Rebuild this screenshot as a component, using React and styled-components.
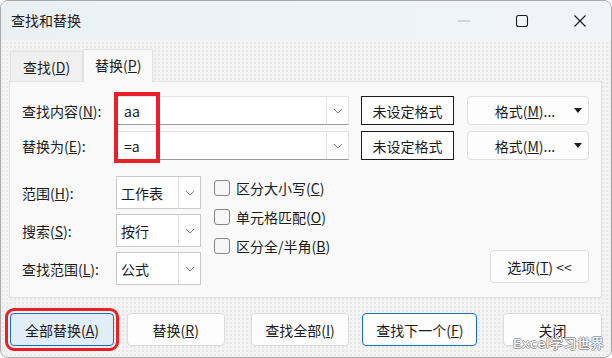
import styled, { createGlobalStyle } from 'styled-components';

const GlobalStyle = createGlobalStyle`
  html, body {
    margin: 0;
    padding: 0;
    background: #ffffff;
  }
  body {
    font-family: "Noto Sans CJK SC", "Noto Sans", sans-serif;
    font-size: 14px;
    color: #1b1b1b;
  }
`;

const FONT = `"Noto Sans CJK SC", "Noto Sans", sans-serif`;

export default function App() {
  return (
    <>
      <GlobalStyle />
      <Window>
        <TitleBar>
          <Title>查找和替换</Title>
          <Controls>
            <CtrlBtn>
              <svg width="14" height="14" viewBox="0 0 14 14">
                <line x1="1" y1="7" x2="13" y2="7" stroke="#b9b9b9" strokeWidth="1" />
              </svg>
            </CtrlBtn>
            <CtrlBtn>
              <svg width="14" height="14" viewBox="0 0 14 14">
                <rect x="1.5" y="1.5" width="11" height="11" rx="2" fill="none" stroke="#1b1b1b" strokeWidth="1.1" />
              </svg>
            </CtrlBtn>
            <CtrlBtn>
              <svg width="14" height="14" viewBox="0 0 14 14">
                <path d="M1.5 1.5 L12.5 12.5 M12.5 1.5 L1.5 12.5" stroke="#1b1b1b" strokeWidth="1.1" />
              </svg>
            </CtrlBtn>
          </Controls>
        </TitleBar>

        <Body>
          <TabStrip>
            <Tab>查找(<u>D</u>)</Tab>
            <Tab $active>替换(<u>P</u>)</Tab>
          </TabStrip>

          <Panel>
            <FieldRows>
              <Labels>
                <Label>查找内容(<u>N</u>):</Label>
                <Label>替换为(<u>E</u>):</Label>
              </Labels>
              <InputCol>
                <ComboInput>
                  <InputText>aa</InputText>
                  <ArrowBox><Chevron /></ArrowBox>
                </ComboInput>
                <ComboInput>
                  <InputText>=a</InputText>
                  <ArrowBox><Chevron /></ArrowBox>
                </ComboInput>
                <RedMark />
              </InputCol>
              <PreviewCol>
                <Preview>未设定格式</Preview>
                <Preview>未设定格式</Preview>
              </PreviewCol>
              <FormatCol>
                <FormatBtn>
                  <span>格式(<u>M</u>)...</span>
                  <Caret />
                </FormatBtn>
                <FormatBtn>
                  <span>格式(<u>M</u>)...</span>
                  <Caret />
                </FormatBtn>
              </FormatCol>
            </FieldRows>

            <OptionRows>
              <SelectGrid>
                <Label>范围(<u>H</u>):</Label>
                <Select><SelectText>工作表</SelectText><SelectArrow><Chevron /></SelectArrow></Select>
                <Label>搜索(<u>S</u>):</Label>
                <Select><SelectText>按行</SelectText><SelectArrow><Chevron /></SelectArrow></Select>
                <Label>查找范围(<u>L</u>):</Label>
                <Select><SelectText>公式</SelectText><SelectArrow><Chevron /></SelectArrow></Select>
              </SelectGrid>
              <Checks>
                <CheckRow><Box />区分大小写(<u>C</u>)</CheckRow>
                <CheckRow><Box />单元格匹配(<u>O</u>)</CheckRow>
                <CheckRow><Box />区分全/半角(<u>B</u>)</CheckRow>
              </Checks>
              <OptionsBtn>选项(<u>T</u>) &lt;&lt;</OptionsBtn>
            </OptionRows>
          </Panel>

          <ButtonRow>
            <Button $w={104} $focus $marked>全部替换(<u>A</u>)</Button>
            <Button $w={98} $ml={13}>替换(<u>R</u>)</Button>
            <Button $w={99} $ml={26}>查找全部(<u>I</u>)</Button>
            <Button $w={115} $ml={13} $default>查找下一个(<u>F</u>)</Button>
            <Button $w={99} $ml={26}>关闭</Button>
          </ButtonRow>
        </Body>
        <Watermark>Excel学习世界</Watermark>
      </Window>
    </>
  );
}

function Chevron() {
  return (
    <svg width="10" height="6" viewBox="0 0 10 6">
      <path d="M1 1 L5 5 L9 1" fill="none" stroke="#7a7a7a" strokeWidth="1" />
    </svg>
  );
}

function Caret() {
  return (
    <svg width="8" height="5" viewBox="0 0 8 5">
      <path d="M0 0 L8 0 L4 5 Z" fill="#1b1b1b" />
    </svg>
  );
}

const Window = styled.div`
  position: relative;
  width: 612px;
  height: 358px;
  box-sizing: border-box;
  border: 1px solid #a9a9a9;
  border-radius: 8px;
  overflow: hidden;
  display: flex;
  flex-direction: column;
  background-color: #f3f3f3;
  background-image: radial-gradient(#e7e7e7 0.7px, transparent 0.8px);
  background-size: 4px 4px;
`;

const TitleBar = styled.div`
  height: 39px;
  flex-shrink: 0;
  display: flex;
  align-items: center;
  justify-content: space-between;
  background: linear-gradient(to right, #eaf1f5, #eef3f7 60%, #f0f4f8);
  padding-left: 10px;
`;

const Title = styled.div`
  font-size: 14px;
  color: #1b1b1b;
  margin-top: -1px;
`;

const Controls = styled.div`
  display: flex;
  align-items: center;
  height: 100%;
  margin-right: 2px;
`;

const CtrlBtn = styled.div`
  width: 58px;
  height: 100%;
  display: flex;
  align-items: center;
  justify-content: center;
`;

const Body = styled.div`
  flex: 1;
  display: flex;
  flex-direction: column;
  padding: 8px 9px 0 8px;
`;

const TabStrip = styled.div`
  display: flex;
  align-items: flex-end;
  height: 33px;
  padding-left: 1px;
`;

const Tab = styled.div`
  height: ${(p) => (p.$active ? '33px' : '30px')};
  box-sizing: border-box;
  padding: 0 ${(p) => (p.$active ? '11px' : '12px')};
  display: flex;
  align-items: center;
  font-size: 14px;
  background: ${(p) => (p.$active ? '#f9f9f9' : '#f0f0f0')};
  border: 1px solid #e2e2e2;
  border-bottom: none;
  margin-bottom: ${(p) => (p.$active ? '-1px' : '0')};
  position: relative;
  z-index: ${(p) => (p.$active ? 1 : 0)};
  padding-bottom: ${(p) => (p.$active ? '3px' : '0')};
`;

const Panel = styled.div`
  height: 217px;
  box-sizing: border-box;
  background: #f9f9f9;
  border: 1px solid #e2e2e2;
  padding: 14px 12px 0 12px;
  display: flex;
  flex-direction: column;
`;

const FieldRows = styled.div`
  display: flex;
  align-items: flex-start;
`;

const Labels = styled.div`
  width: 95px;
  display: flex;
  flex-direction: column;
  gap: 6px;
`;

const Label = styled.div`
  height: 29px;
  display: flex;
  align-items: center;
  font-size: 14px;
  white-space: nowrap;
`;

const InputCol = styled.div`
  position: relative;
  width: 232px;
  display: flex;
  flex-direction: column;
  gap: 6px;
`;

const ComboInput = styled.div`
  height: 29px;
  box-sizing: border-box;
  background: #ffffff;
  border: 1px solid #e3e3e3;
  border-bottom: 1px solid #9a9a9a;
  display: flex;
  align-items: stretch;
`;

const InputText = styled.div`
  flex: 1;
  display: flex;
  align-items: center;
  padding-left: 6px;
  font-size: 14px;
  font-family: ${FONT};
`;

const ArrowBox = styled.div`
  width: 21px;
  display: flex;
  align-items: center;
  justify-content: center;
  border-left: 1px solid #e3e3e3;
  background: #ffffff;
`;

const RedMark = styled.div`
  position: absolute;
  left: -3px;
  top: -4px;
  width: 46px;
  height: 71px;
  box-sizing: border-box;
  border: 4px solid #e8202a;
  pointer-events: none;
`;

const PreviewCol = styled.div`
  margin-left: 12px;
  display: flex;
  flex-direction: column;
  gap: 6px;
`;

const Preview = styled.div`
  width: 93px;
  height: 29px;
  box-sizing: border-box;
  border: 1px solid #1b1b1b;
  background: #ffffff;
  display: flex;
  align-items: center;
  justify-content: center;
  font-size: 14px;
`;

const FormatCol = styled.div`
  margin-left: 13px;
  display: flex;
  flex-direction: column;
  gap: 6px;
`;

const FormatBtn = styled.div`
  width: 122px;
  height: 29px;
  box-sizing: border-box;
  border: 1px solid #e0e0e0;
  border-radius: 4px;
  background: #fdfdfd;
  display: flex;
  align-items: center;
  font-size: 14px;
  padding: 0 6px 0 8px;

  span {
    flex: 1;
    text-align: center;
  }
`;

const OptionRows = styled.div`
  margin-top: 16px;
  display: flex;
  align-items: flex-start;
`;

const SelectGrid = styled.div`
  display: grid;
  grid-template-columns: 94px 85px;
  row-gap: 5px;
  align-items: center;

  ${Label} {
    height: 33px;
  }
`;

const Select = styled.div`
  height: 33px;
  box-sizing: border-box;
  border: 1px solid #c9c9c9;
  background: #ffffff;
  display: flex;
  align-items: stretch;
`;

const SelectText = styled.div`
  flex: 1;
  display: flex;
  align-items: center;
  padding-left: 4px;
  font-size: 14px;
`;

const SelectArrow = styled.div`
  width: 21px;
  border-left: 1px solid #dcdcdc;
  display: flex;
  align-items: center;
  justify-content: center;
`;

const Checks = styled.div`
  margin-left: 13px;
  margin-top: 2px;
  display: flex;
  flex-direction: column;
  gap: 9px;
`;

const CheckRow = styled.div`
  display: flex;
  align-items: center;
  height: 20px;
  font-size: 14px;
  white-space: nowrap;
`;

const Box = styled.span`
  width: 16px;
  height: 16px;
  box-sizing: border-box;
  border: 1px solid #868686;
  border-radius: 3px;
  background: #f6f6f6;
  margin-right: 6px;
  flex-shrink: 0;
`;

const OptionsBtn = styled.div`
  margin-left: auto;
  margin-top: 74px;
  width: 99px;
  height: 33px;
  box-sizing: border-box;
  border: 1px solid #dedede;
  border-radius: 4px;
  background: #fdfdfd;
  display: flex;
  align-items: center;
  justify-content: center;
  font-size: 14px;
`;

const ButtonRow = styled.div`
  display: flex;
  align-items: center;
  margin-top: 15px;
  padding-left: 1px;
`;

const Button = styled.div`
  width: ${(p) => p.$w}px;
  margin-left: ${(p) => p.$ml || 0}px;
  height: 33px;
  box-sizing: border-box;
  border-radius: 4px;
  border: 1px solid ${(p) => (p.$focus || p.$default ? '#1a6fc4' : '#dcdcdc')};
  background: ${(p) => (p.$focus ? '#e1edf8' : '#fdfdfd')};
  display: flex;
  align-items: center;
  justify-content: center;
  font-size: 14px;
  outline: ${(p) => (p.$marked ? '3px solid #e8202a' : 'none')};
  outline-offset: 2px;
`;

const Watermark = styled.div`
  position: absolute;
  right: 7px;
  bottom: 5px;
  font-family: "DejaVu Sans", ${FONT};
  font-size: 13px;
  color: #ffffff;
  letter-spacing: 0.5px;
  text-shadow: -1px 0 #9a9a9a, 1px 0 #9a9a9a, 0 -1px #9a9a9a, 0 1px #9a9a9a;
`;
